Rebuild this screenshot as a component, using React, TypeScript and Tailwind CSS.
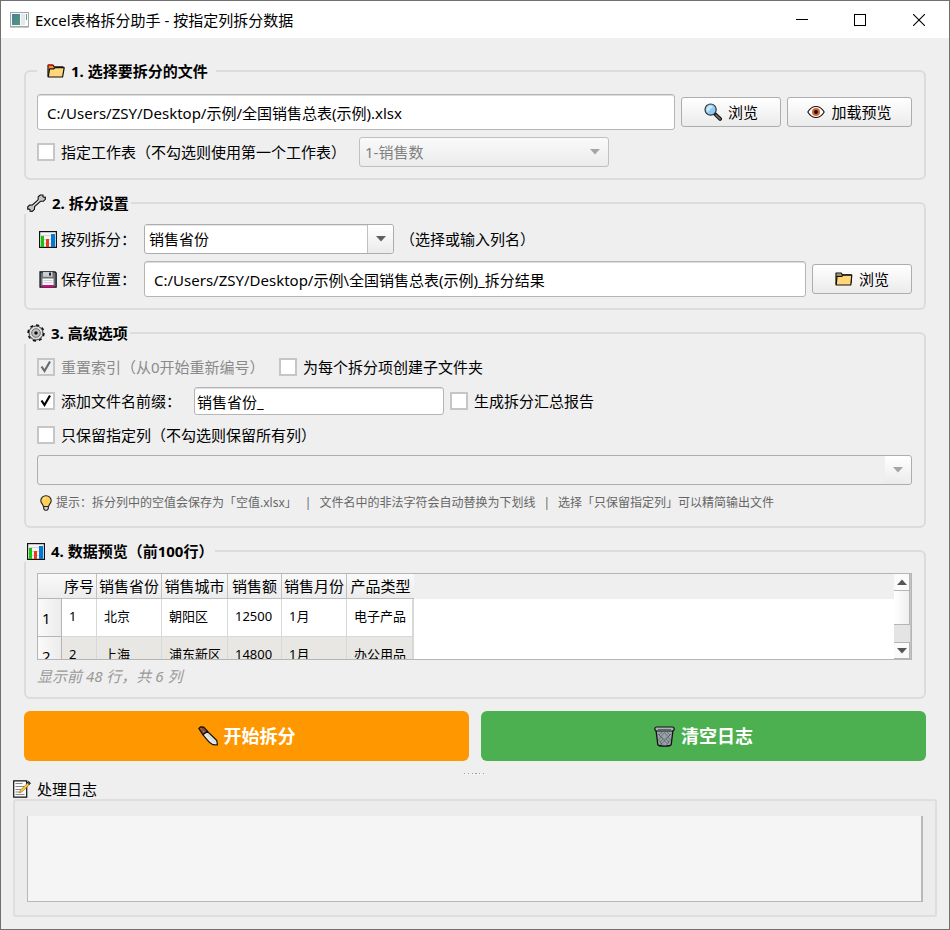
import { useState } from 'react';
import type { ReactNode } from 'react';

interface IconProps {
  className?: string;
}

function AppIcon() {
  return (
    <svg width="19" height="16" viewBox="0 0 19 16" className="shrink-0">
      <defs>
        <linearGradient id="app-screen" x1="0" y1="0" x2="1" y2="1">
          <stop offset="0" stopColor="#4a7fa5" />
          <stop offset="1" stopColor="#4f9a72" />
        </linearGradient>
      </defs>
      <rect x="0.5" y="0.5" width="18" height="14" fill="#fafbfb" stroke="#a3a7aa" />
      <rect x="2" y="2" width="8" height="11" fill="url(#app-screen)" />
      <rect x="11" y="2" width="4" height="11" fill="#e4e8ec" />
      <rect x="16" y="2" width="1" height="6" fill="#5b9f94" />
      <path d="M0 15.5h19" stroke="#c9c9c9" />
    </svg>
  );
}

function OpenFolderIcon() {
  return (
    <svg width="18" height="14" viewBox="0 0 18 14" className="shrink-0">
      <path d="M1 12.5V1.2h5l1.2 1.7H16V5" fill="#f0a020" stroke="#111" strokeWidth="1.2" strokeLinejoin="round" />
      <path d="M1.2 1.2h4.6" stroke="#e81123" strokeWidth="1.8" />
      <path d="M1.2 13 2.600 4.800h4.200L8.200 3.600h9L15.600 13z" fill="#ffd679" stroke="#111" strokeWidth="1.2" strokeLinejoin="round" />
    </svg>
  );
}

function FolderIcon() {
  return (
    <svg width="18" height="14" viewBox="0 0 18 14" className="shrink-0">
      <path d="M1 12.5V1.2h5.2l1.2 1.6h8.8V11" fill="#f0a020" stroke="#111" strokeWidth="1.2" strokeLinejoin="round" />
      <path d="M1.7 2h4" stroke="#2f9bea" strokeWidth="1" />
      <path d="M1.2 13 2 4.4h4.800l1.3-1.2h8.700L15.800 13z" fill="#ffd679" stroke="#111" strokeWidth="1.2" strokeLinejoin="round" />
    </svg>
  );
}

function SearchIcon() {
  return (
    <svg width="18" height="18" viewBox="0 0 18 18" className="shrink-0">
      <path d="m10.5 10.5 5.6 5.4" stroke="#111" strokeWidth="3.8" strokeLinecap="round" />
      <path d="m12 12 4 3.8" stroke="#6f7579" strokeWidth="1.7" strokeLinecap="round" />
      <circle cx="6.6" cy="6.6" r="5.6" fill="#8ecbf7" stroke="#333" strokeWidth="1.2" />
      <path d="M2.4 6.8a4.2 4.2 0 0 1 4.3-4.4l2.6.8-5.8 6z" fill="#cde8fc" />
    </svg>
  );
}

function EyeIcon() {
  return (
    <svg width="18" height="14" viewBox="0 0 18 14" className="shrink-0">
      <path d="M.8 7C3.2 3 6 1.500 9 1.500S14.800 3 17.200 7C14.800 11 12 12.500 9 12.500S3.200 11 .8 7z" fill="#fff" stroke="#111" strokeWidth="1.1" />
      <circle cx="9" cy="7" r="4" fill="#d9622b" />
      <circle cx="9" cy="7" r="1.900" fill="#111" />
    </svg>
  );
}

function WrenchIcon() {
  return (
    <svg width="19" height="18" viewBox="0 0 19 18" className="shrink-0">
      <path
        d="M13.400 1 11.200 2.800l-.1 3-5.700 5.200-2.900.1L.7 13v2.300l1.500-.2.900.8-.1 1.400 2.300.1 2.100-2 .2-2.700 5.900-5.400h2.700l2.100-2 .1-2.200-1.600.2-.9-.8.200-1.500z"
        fill="#c4c4c4"
        stroke="#111"
        strokeWidth="1.100"
        strokeLinejoin="round"
      />
      <path d="m5.800 12 6.600-6" stroke="#e2e2e2" strokeWidth="0.800" />
    </svg>
  );
}

function GearIcon() {
  return (
    <svg width="18" height="18" viewBox="0 0 18 18" className="shrink-0">
      <circle cx="9" cy="9" r="7.800" fill="none" stroke="#111" strokeWidth="1.800" strokeDasharray="3.100 3" />
      <circle cx="9" cy="9" r="7" fill="#dcdcdc" stroke="#222" strokeWidth="0.900" />
      <circle cx="9" cy="9" r="4.300" fill="#c4c4c4" stroke="#555" strokeWidth="0.800" />
      <circle cx="9" cy="9" r="1.800" fill="#111" />
    </svg>
  );
}

function ChartIcon() {
  return (
    <svg width="18" height="17" viewBox="0 0 18 17" className="shrink-0">
      <rect x="0.600" y="0.600" width="16.800" height="15.800" fill="#f4f4f4" stroke="#111" strokeWidth="1.200" />
      <path d="M1 4.500h16M1 8.500h16M1 12.500h16" stroke="#d5d5d5" strokeWidth="1" />
      <rect x="2" y="5" width="3" height="11" fill="#16c60c" />
      <rect x="7" y="8" width="3" height="8" fill="#f03a17" />
      <rect x="12" y="3" width="4" height="13" fill="#0078d7" />
    </svg>
  );
}

function SaveIcon() {
  return (
    <svg width="18" height="17" viewBox="0 0 18 17" className="shrink-0">
      <path d="M1 .8h15l1.200 1.200v14.200H1z" fill="#6b7378" stroke="#111" strokeWidth="1.200" />
      <rect x="4" y="1" width="9.500" height="4.800" fill="#c9ced1" />
      <rect x="10" y="1.600" width="2" height="3" fill="#222" />
      <rect x="3.500" y="7.500" width="11" height="7" fill="#fafafa" />
      <path d="M4.500 9.500h9M4.500 11.500h9" stroke="#d2d2d2" />
      <rect x="3" y="14" width="12" height="2" fill="#e3008c" />
    </svg>
  );
}

function BulbIcon() {
  return (
    <svg width="12" height="16" viewBox="0 0 12 16" className="shrink-0">
      <path d="M6 .7a5 5 0 0 0-5.200 5c0 2.600 2.500 3.600 2.700 6h5c.2-2.400 2.700-3.400 2.700-6A5 5 0 0 0 6 .7z" fill="#ffd05a" stroke="#222" strokeWidth="1.100" />
      <path d="M3.300 4.500A3 3 0 0 1 6 2.500" stroke="#ffe9a8" strokeWidth="1.200" fill="none" />
      <path d="M3.700 11.500h4.600v2.200L7 15.300H5l-1.300-1.600z" fill="#d8d8d8" stroke="#222" strokeWidth="1.100" />
    </svg>
  );
}

function KnifeIcon() {
  return (
    <svg width="20" height="20" viewBox="0 0 20 20" className="shrink-0">
      <path
        d="M4.800 8.600 9.200 5.200 18.800 14.500l.6 4.500-4.400-.3c-2.400-1-4.200-2.600-5.600-4.600z"
        fill="#e4e8e9"
        stroke="#111"
        strokeWidth="1.200"
        strokeLinejoin="round"
      />
      <path d="m8.500 7.500 9 9.500" stroke="#c9cfd1" strokeWidth="1" />
      <path d="M.8 2.400 2.500.9l3.300.2 3.600 4.100-4.600 3.500z" fill="#8a4b2d" stroke="#111" strokeWidth="1.200" strokeLinejoin="round" />
      <path d="m3 2.700.7.700M5.400 5.200l.7.700" stroke="#e8c9a8" strokeWidth="1" />
    </svg>
  );
}

function TrashIcon() {
  return (
    <svg width="21" height="21" viewBox="0 0 21 21" className="shrink-0">
      <path d="M2 4 3.800 18.600c1 2 12.400 2 13.400 0L19 4z" fill="#98a2a6" stroke="#111" strokeWidth="1.300" />
      <path
        d="m4 8 3 3-2.500 3 3 3-1 2M8 6 5 9l4 4-3 3 3 3.500M10.500 6.500 7 10.500l4 4-3 3M10.500 6.500l3.500 4-4 4 3 3M13 6l3 3-4 4 3 3-3 3.500M17 8l-3 3 2.500 3-3 3"
        fill="none"
        stroke="#566064"
        strokeWidth="0.700"
      />
      <rect x="0.800" y="1" width="19.400" height="4" rx="2" fill="#aab3b6" stroke="#111" strokeWidth="1.200" />
      <path d="M4 3.500h13" stroke="#5f686c" strokeWidth="1" />
    </svg>
  );
}

function NoteIcon() {
  return (
    <svg width="18" height="18" viewBox="0 0 18 18" className="shrink-0">
      <path d="M.7.8h13v16.400H.7z" fill="#fbfbfb" stroke="#111" strokeWidth="1.200" />
      <path d="M2.500 3.500h7M2.500 6.500h9M2.500 9.500h6M2.500 12h5M2.500 14.500h9" stroke="#8a8a8a" strokeWidth="1.200" />
      <path d="m6.500 12.800 1-2.800 7.300-7 1.600 1.500-7.200 7.200z" fill="#ffc83d" stroke="#8c6a14" strokeWidth="0.600" />
      <path d="m14 2.700 1.600-1.200 1.800 1.600-1.300 1.600" fill="#555" stroke="#111" strokeWidth="1" />
    </svg>
  );
}

function ArrowDown({ className }: IconProps) {
  return (
    <svg width="10" height="6" viewBox="0 0 10 6" className={className}>
      <path d="M0 0h10L5 5.500z" fill="currentColor" />
    </svg>
  );
}

interface GroupProps {
  icon: ReactNode;
  title: string;
  inset?: boolean;
  children: ReactNode;
}

function Group({ icon, title, inset, children }: GroupProps) {
  return (
    <fieldset className="min-w-0 rounded-md border-2 border-[#dcdcdc] pr-3 pb-[11px] pl-[11px]">
      <legend
        className={
          inset
            ? 'flex h-[22px] items-center gap-1.5 bg-[#efefef] pr-2 pl-2.5 font-bold'
            : '-ml-[13px] flex h-[22px] items-center gap-1.5 bg-[#efefef] pr-0.5 pl-[3px] font-bold'
        }
      >
        {icon}
        {title}
      </legend>
      {children}
    </fieldset>
  );
}

interface CheckProps {
  label: string;
  checked: boolean;
  disabled?: boolean;
  onChange?: (value: boolean) => void;
}

function Check({ label, checked, disabled, onChange }: CheckProps) {
  return (
    <label className={disabled ? 'flex items-center gap-1.5 text-[#8a8a8a]' : 'flex items-center gap-1.5'}>
      <span className="grid shrink-0">
        <input
          type="checkbox"
          checked={checked}
          disabled={disabled}
          onChange={(e) => onChange?.(e.target.checked)}
          className="col-start-1 row-start-1 size-[18px] appearance-none border-2 border-[#c6c6c6] bg-white disabled:bg-[#f0f0f0]"
        />
        {checked && (
          <svg
            width="18"
            height="18"
            viewBox="0 0 18 18"
            className={
              disabled
                ? 'pointer-events-none col-start-1 row-start-1 text-[#6b6b6b]'
                : 'pointer-events-none col-start-1 row-start-1 text-black'
            }
          >
            <path d="m4.500 8.500 3 4.500 5.500-9.500" fill="none" stroke="currentColor" strokeWidth="2.200" />
          </svg>
        )}
      </span>
      {label}
    </label>
  );
}

function ToolButton({ icon, label, wide }: { icon: ReactNode; label: string; wide?: boolean }) {
  return (
    <button
      type="button"
      className={
        wide
          ? 'flex h-[30px] w-[125px] shrink-0 items-center justify-center gap-1.5 rounded-[3px] border border-[#adadad] bg-linear-to-b from-white to-[#ebebeb]'
          : 'flex h-[30px] w-[100px] shrink-0 items-center justify-center gap-1.5 rounded-[3px] border border-[#adadad] bg-linear-to-b from-white to-[#ebebeb]'
      }
    >
      {icon}
      {label}
    </button>
  );
}

const columns = ['序号', '销售省份', '销售城市', '销售额', '销售月份', '产品类型'];
const rows = [
  ['1', '北京', '朝阳区', '12500', '1月', '电子产品'],
  ['2', '上海', '浦东新区', '14800', '1月', '办公用品'],
];

function PreviewTable() {
  return (
    <div className="flex h-[87px] overflow-hidden border border-[#b5b5b5] bg-white">
      <div className="min-w-0 flex-1 overflow-hidden">
        <table className="w-full table-fixed border-separate border-spacing-0">
          <colgroup>
            <col className="w-6" />
            <col className="w-[35px]" />
            <col className="w-[65px]" />
            <col className="w-[66px]" />
            <col className="w-[54px]" />
            <col className="w-[65px]" />
            <col className="w-[67px]" />
            <col />
          </colgroup>
          <thead>
            <tr className="h-[25px]">
              <th className="border-b border-[#b5b5b5] bg-linear-to-b from-[#fafafa] to-[#ececec] p-0" />
              {columns.map((name) => (
                <th
                  key={name}
                  className="border-r border-b border-[#c0c0c0] bg-linear-to-b from-[#fafafa] to-[#ececec] p-0 text-center font-normal whitespace-nowrap last-of-type:border-r-0"
                >
                  {name}
                </th>
              ))}
              <td className="bg-[#efefef] p-0" />
            </tr>
          </thead>
          <tbody>
            {rows.map((cells, i) => (
              <tr key={cells[0]} className="group h-[38px]">
                <th className="border-r border-b border-[#b5b5b5] bg-linear-to-r from-[#fafafa] to-[#ececec] p-0 pl-1 text-left font-normal">
                  {i + 1}
                </th>
                {cells.map((cell, j) => (
                  <td
                    key={j}
                    className="border-r border-b border-[#d8d8d8] p-0 pb-1 pl-[7px] text-[13px] whitespace-nowrap group-even:bg-[#e8e7e3] nth-last-2:border-r-2"
                  >
                    {cell}
                  </td>
                ))}
                <td className="bg-white p-0" />
              </tr>
            ))}
          </tbody>
        </table>
      </div>
      <div className="flex w-[17px] shrink-0 flex-col border-r border-[#c4c4c4] bg-[#e4e4e4]">
        <button
          type="button"
          aria-label="向上滚动"
          className="grid h-[17px] place-items-center border-r border-b border-[#b5b5b5] bg-[#fafafa]"
        >
          <ArrowDown className="rotate-180 text-[#555]" />
        </button>
        <div className="h-[34px] border-r border-b border-[#b5b5b5] bg-linear-to-r from-white to-[#efefef]" />
        <div className="flex-1" />
        <button
          type="button"
          aria-label="向下滚动"
          className="grid h-[17px] place-items-center border-t border-r border-b border-[#b5b5b5] bg-[#fafafa]"
        >
          <ArrowDown className="text-[#555]" />
        </button>
      </div>
    </div>
  );
}

export default function App() {
  const [filePath, setFilePath] = useState('C:/Users/ZSY/Desktop/示例/全国销售总表(示例).xlsx');
  const [useSheet, setUseSheet] = useState(false);
  const [column, setColumn] = useState('销售省份');
  const [outputPath, setOutputPath] = useState('C:/Users/ZSY/Desktop/示例\\全国销售总表(示例)_拆分结果');
  const [subfolders, setSubfolders] = useState(false);
  const [usePrefix, setUsePrefix] = useState(true);
  const [prefix, setPrefix] = useState('销售省份_');
  const [report, setReport] = useState(false);
  const [keepColumns, setKeepColumns] = useState(false);
  const [log, setLog] = useState('');

  return (
    <div className="flex min-h-screen flex-col border border-[#707070] bg-[#efefef] font-['Noto_Sans','Noto_Sans_CJK_SC',sans-serif] text-[15px] leading-5 text-black">
      <header className="flex h-[37px] items-center bg-white pl-[9px]">
        <AppIcon />
        <h1 className="ml-1.5 flex-1">Excel表格拆分助手 - 按指定列拆分数据</h1>
        <button type="button" aria-label="最小化" className="grid h-full w-[58px] place-items-center">
          <svg width="12" height="12" viewBox="0 0 12 12">
            <path d="M0 5.500h12" stroke="#000" />
          </svg>
        </button>
        <button type="button" aria-label="最大化" className="grid h-full w-[58px] place-items-center">
          <svg width="12" height="12" viewBox="0 0 12 12">
            <rect x="0.500" y="0.500" width="11" height="11" fill="none" stroke="#000" />
          </svg>
        </button>
        <button type="button" aria-label="关闭" className="grid h-full w-[60px] place-items-center">
          <svg width="12" height="12" viewBox="0 0 12 12">
            <path d="m0 0 12 12M12 0 0 12" stroke="#000" strokeWidth="1.100" />
          </svg>
        </button>
      </header>

      <main className="flex flex-col gap-3 px-[23px] pt-[22px]">
        <Group icon={<OpenFolderIcon />} title="1. 选择要拆分的文件" inset>
          <div className="flex flex-col gap-[7px] pt-3">
            <div className="flex items-center gap-1.5">
              <input
                aria-label="文件路径"
                value={filePath}
                onChange={(e) => setFilePath(e.target.value)}
                className="h-9 min-w-0 flex-1 rounded-[3px] border border-[#b5b5b5] bg-white px-[9px] inset-shadow-[0_1px_0_#dddddd]"
              />
              <ToolButton icon={<SearchIcon />} label="浏览" />
              <ToolButton icon={<EyeIcon />} label="加载预览" wide />
            </div>
            <div className="flex items-center">
              <div className="w-[322px]">
                <Check label="指定工作表（不勾选则使用第一个工作表）" checked={useSheet} onChange={setUseSheet} />
              </div>
              <div className="grid w-[250px] items-center">
                <select
                  aria-label="工作表"
                  disabled={!useSheet}
                  className="col-start-1 row-start-1 h-[30px] appearance-none rounded-[3px] border border-[#c0c0c0] bg-linear-to-b from-[#fafafa] to-[#ececec] px-[5px] disabled:text-[#808080] disabled:opacity-100"
                >
                  <option>1-销售数</option>
                </select>
                <ArrowDown className="pointer-events-none col-start-1 row-start-1 mr-[9px] justify-self-end text-[#a5a5a5]" />
              </div>
            </div>
          </div>
        </Group>

        <Group icon={<WrenchIcon />} title="2. 拆分设置">
          <div className="flex flex-col gap-[7px] pt-2.5">
            <div className="flex items-center">
              <label htmlFor="split-column" className="flex w-[107px] items-center gap-1 pl-0.5">
                <ChartIcon />
                按列拆分：
              </label>
              <div className="flex h-[30px] w-[250px] rounded-[3px] border border-[#adadad] bg-white">
                <input
                  id="split-column"
                  value={column}
                  onChange={(e) => setColumn(e.target.value)}
                  className="min-w-0 flex-1 px-1 inset-shadow-[0_1px_0_#e6e6e6]"
                />
                <button
                  type="button"
                  aria-label="选择列"
                  className="grid w-[26px] place-items-center rounded-r-[3px] border-l border-[#c0c0c0] bg-linear-to-b from-white to-[#ebebeb]"
                >
                  <ArrowDown className="text-[#606060]" />
                </button>
              </div>
              <span className="ml-1.5">（选择或输入列名）</span>
            </div>
            <div className="flex items-center gap-1.5">
              <div className="flex min-w-0 flex-1 items-center">
                <label htmlFor="output-path" className="flex w-[107px] items-center gap-1 pl-0.5">
                  <SaveIcon />
                  保存位置：
                </label>
                <input
                  id="output-path"
                  value={outputPath}
                  onChange={(e) => setOutputPath(e.target.value)}
                  className="h-9 min-w-0 flex-1 rounded-[3px] border border-[#b5b5b5] bg-white px-[9px] inset-shadow-[0_1px_0_#dddddd]"
                />
              </div>
              <ToolButton icon={<FolderIcon />} label="浏览" />
            </div>
          </div>
        </Group>

        <Group icon={<GearIcon />} title="3. 高级选项">
          <div className="flex flex-col gap-1.5 pt-[9px]">
            <div className="flex h-7 items-center gap-1.5">
              <div className="w-[236px]">
                <Check label="重置索引（从0开始重新编号）" checked disabled />
              </div>
              <Check label="为每个拆分项创建子文件夹" checked={subfolders} onChange={setSubfolders} />
            </div>
            <div className="flex h-7 items-center gap-1.5">
              <div className="w-[151px]">
                <Check label="添加文件名前缀：" checked={usePrefix} onChange={setUsePrefix} />
              </div>
              <input
                aria-label="文件名前缀"
                value={prefix}
                onChange={(e) => setPrefix(e.target.value)}
                className="h-7 w-[250px] rounded-[3px] border border-[#b5b5b5] bg-white px-0.5 inset-shadow-[0_1px_0_#dddddd]"
              />
              <Check label="生成拆分汇总报告" checked={report} onChange={setReport} />
            </div>
            <div className="flex h-7 items-center">
              <Check label="只保留指定列（不勾选则保留所有列）" checked={keepColumns} onChange={setKeepColumns} />
            </div>
            <div className="flex h-[30px] rounded-[3px] border border-[#adadad]">
              <input aria-label="保留的列" disabled={!keepColumns} className="min-w-0 flex-1 px-1" />
              <button
                type="button"
                aria-label="选择保留的列"
                disabled={!keepColumns}
                className="grid w-[26px] place-items-center rounded-r-[3px] bg-linear-to-b from-white to-[#ebebeb]"
              >
                <ArrowDown className="text-[#a5a5a5]" />
              </button>
            </div>
            <p className="flex h-6 items-center gap-2 pl-[3px] text-xs text-[#666]">
              <span className="flex items-center gap-1">
                <BulbIcon />
                提示：拆分列中的空值会保存为「空值.xlsx」
              </span>
              <span>|</span>
              <span>文件名中的非法字符会自动替换为下划线</span>
              <span>|</span>
              <span>选择「只保留指定列」可以精简输出文件</span>
            </p>
          </div>
        </Group>

        <Group icon={<ChartIcon />} title="4. 数据预览（前100行）">
          <div className="flex flex-col gap-1.5 pt-[11px]">
            <PreviewTable />
            <p className="text-[#999] italic">显示前 48 行，共 6 列</p>
          </div>
        </Group>

        <div className="grid grid-cols-2 gap-3">
          <button
            type="button"
            className="flex h-[50px] items-center justify-center gap-1.5 rounded-md bg-[#ff9800] text-lg font-bold text-white"
          >
            <KnifeIcon />
            开始拆分
          </button>
          <button
            type="button"
            onClick={() => setLog('')}
            className="flex h-[50px] items-center justify-center gap-1.5 rounded-md bg-[#4caf50] text-lg font-bold text-white"
          >
            <TrashIcon />
            清空日志
          </button>
        </div>
      </main>

      <div className="flex justify-center pt-3 pb-1">
        <svg width="22" height="2" viewBox="0 0 22 2">
          <path d="M0 .5h1M4 .5h1M8 .5h1M11 .5h2M15 .5h1M19 .5h1" stroke="#a0a0a0" />
          <path d="M1 1.500h1M5 1.500h1M9 1.500h1M13 1.500h1M16 1.500h1M20 1.500h1" stroke="#fff" />
        </svg>
      </div>

      <section className="flex flex-1 flex-col px-3 pb-3">
        <label htmlFor="log" className="flex h-5 items-center gap-1.5">
          <NoteIcon />
          处理日志
        </label>
        <div className="flex flex-1 rounded-[3px] border-2 border-[#dedede] bg-[#ececec] px-3 pt-[15px] pb-[13px]">
          <textarea
            id="log"
            readOnly
            value={log}
            className="min-h-20 flex-1 resize-none border-r-2 border-b border-l border-[#b8b8b8] bg-[#f5f5f5] p-1"
          />
        </div>
      </section>
    </div>
  );
}
